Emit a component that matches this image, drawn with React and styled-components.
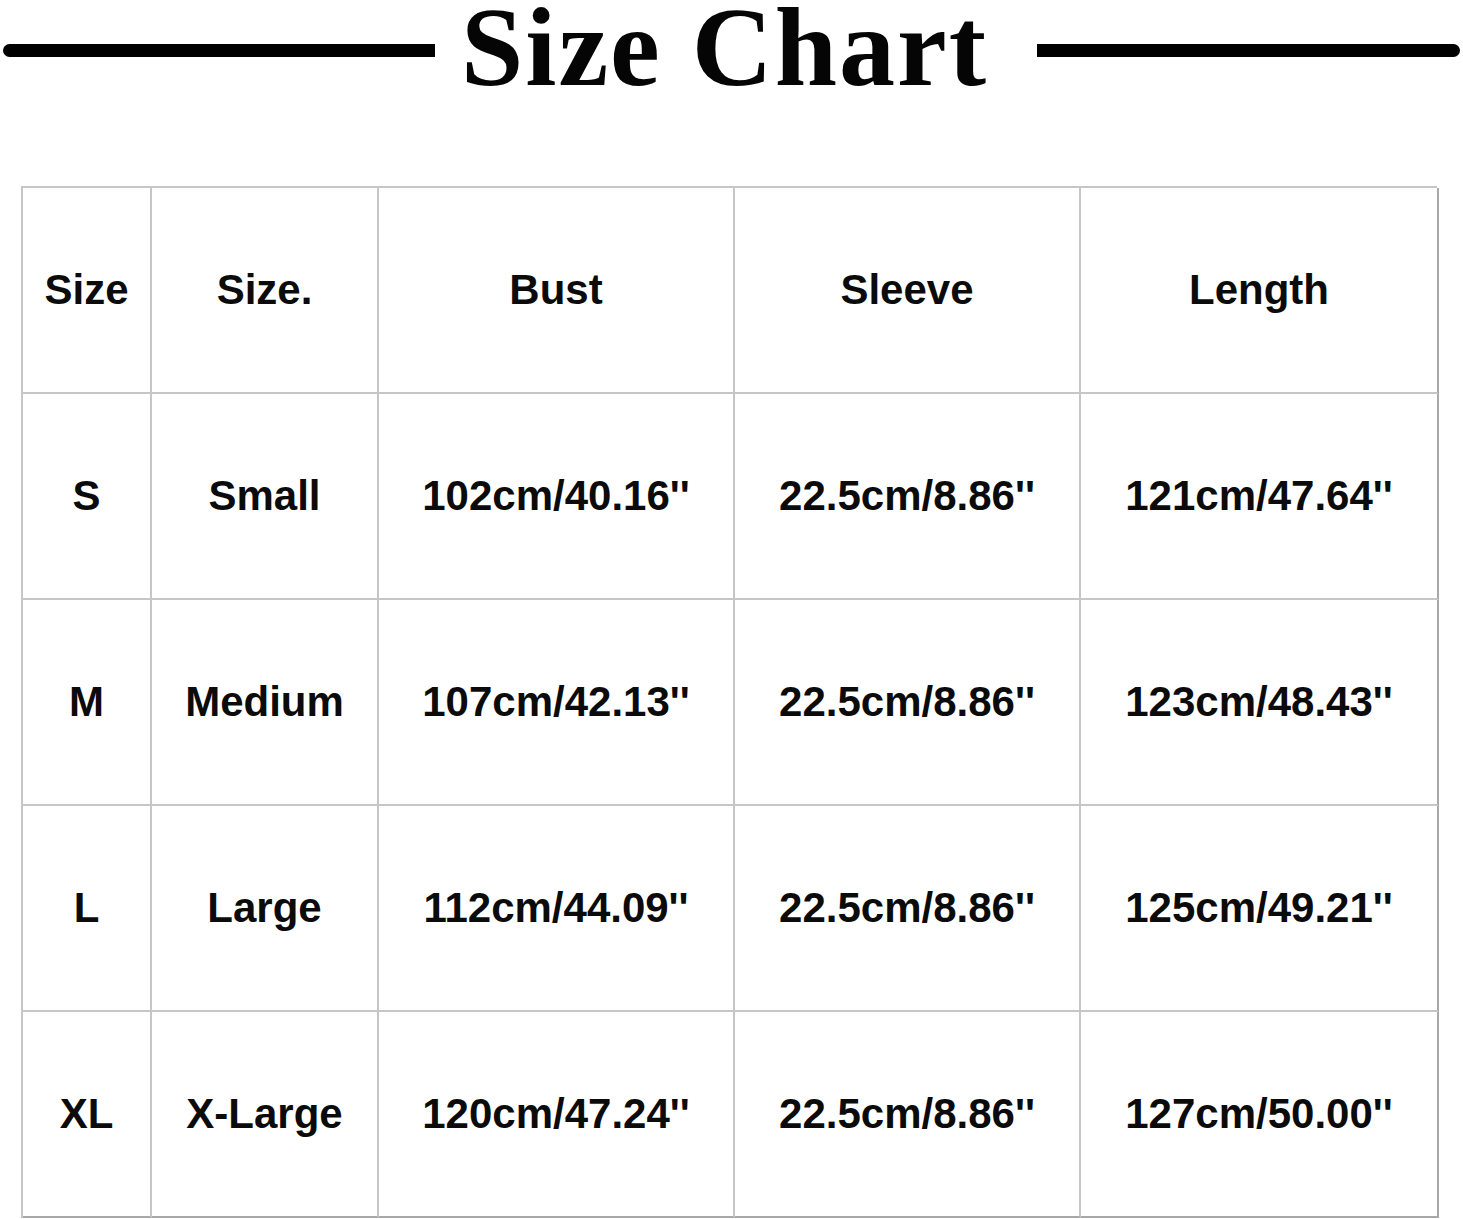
import styled, { createGlobalStyle } from "styled-components"

const rows = [
	["S", "Small", "102cm/40.16''", "22.5cm/8.86''", "121cm/47.64''"],
	["M", "Medium", "107cm/42.13''", "22.5cm/8.86''", "123cm/48.43''"],
	["L", "Large", "112cm/44.09''", "22.5cm/8.86''", "125cm/49.21''"],
	["XL", "X-Large", "120cm/47.24''", "22.5cm/8.86''", "127cm/50.00''"],
]

const headers = ["Size", "Size.", "Bust", "Sleeve", "Length"]

function App() {
	return (
		<Page>
			<GlobalStyle />
			<TitleBar>
				<Rule side="left" />
				<Title>Size Chart</Title>
				<Rule side="right" />
			</TitleBar>
			<Grid>
				{headers.map((h, i) => (
					<Cell key={h} last={i === 4}>
						{h}
					</Cell>
				))}
				{rows.map((row, r) =>
					row.map((value, i) => (
						<Cell key={r + "-" + i} last={i === 4} bottom={r === rows.length - 1}>
							{value}
						</Cell>
					))
				)}
			</Grid>
		</Page>
	)
}

const GlobalStyle = createGlobalStyle`
	body {
		margin: 0;
		background: #fff;
	}
`

const Page = styled.div`
	width: 1463px;
	height: 1219px;
	background: #fff;
	overflow: hidden;
`

const TitleBar = styled.div`
	display: flex;
	align-items: center;
	height: 100px;
	padding: 0 3px;
`

const Rule = styled.div`
	height: 13px;
	background: #000;
	width: ${(p) => (p.side === "left" ? "432px" : "423px")};
	border-radius: ${(p) => (p.side === "left" ? "7px 0 0 7px" : "0 7px 7px 0")};
	margin-left: ${(p) => (p.side === "right" ? "auto" : "0")};
`

const Title = styled.h1`
	margin: 0 0 0 26px;
	font-family: "Liberation Serif", serif;
	font-weight: bold;
	font-size: 112px;
	letter-spacing: 2px;
	line-height: 100px;
	color: #050505;
	transform: translateY(-3px);
`

const Grid = styled.div`
	display: grid;
	grid-template-columns: 129px 227px 356px 346px 358px;
	grid-auto-rows: 206px;
	margin: 86px 0 0 21px;
	width: 1416px;
	border-top: 2px solid #c6c6c6;
	border-left: 2px solid #c6c6c6;
	box-sizing: border-box;
`

const Cell = styled.div`
	display: flex;
	align-items: center;
	justify-content: center;
	border-right: 2px solid ${(p) => (p.last ? "#a8a8a8" : "#c6c6c6")};
	border-bottom: 2px solid ${(p) => (p.bottom ? "#a8a8a8" : "#c6c6c6")};
	font-family: "Liberation Sans", Arial, sans-serif;
	font-weight: bold;
	font-size: 42px;
	color: #0b0b0b;
	white-space: nowrap;
`

export default App
